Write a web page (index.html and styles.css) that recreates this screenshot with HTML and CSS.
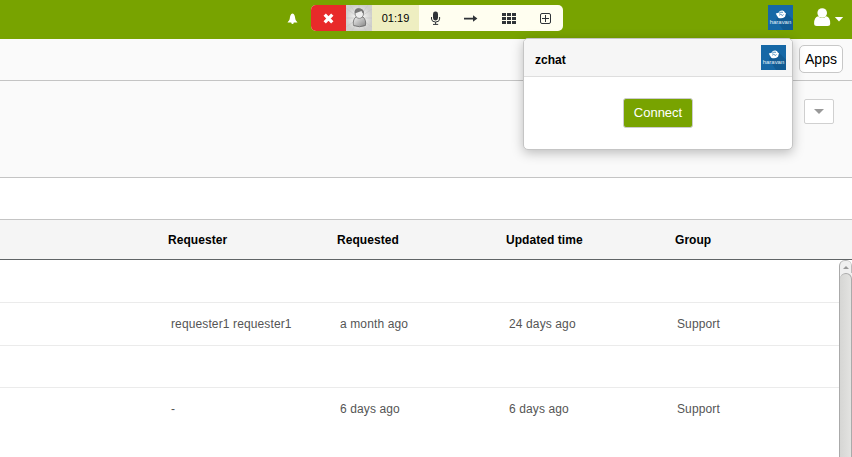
FILE: index.html
```
<!DOCTYPE html>
<html lang="en">
<head>
<meta charset="utf-8">
<title>Tickets</title>
<link rel="stylesheet" href="styles.css">
</head>
<body>
<svg class="defs" width="0" height="0">
  <defs>
    <clipPath id="sq"><rect width="25" height="25"/></clipPath>
    <symbol id="logo" viewBox="0 0 25 25">
      <g clip-path="url(#sq)">
        <rect width="25" height="25" fill="#1668a6"/>
        <path d="M17 7L25 14.5V25H15L8 14Z" fill="#125b93"/>
        <path d="M7.8 8.4L10.5 7.7Q11.5 5.4 14.5 5.6Q16.5 6.2 16.8 7.5L18 8.2L17 11.8Q14 14.2 10.5 12.9L8.8 10.5Z" fill="#fff"/>
        <path d="M11 8.3Q12.5 6.6 15 7.3M11.2 10.2L12.8 9.2L14.2 10.4Q15 10.5 15.5 9.5" fill="none" stroke="#2878b0" stroke-width=".8"/>
        <text x="12.5" y="18.8" text-anchor="middle" textLength="21.5" lengthAdjust="spacingAndGlyphs" class="logo-text">haravan</text>
      </g>
    </symbol>
  </defs>
</svg>
<header class="topbar">
  <svg class="bell" width="11" height="12" viewBox="0 0 11 12"><path d="M5.5 .6C3.6 1 3 3.3 2.8 5.2C2.6 7 1.8 7.8 .5 9.4H10.5C9.2 7.8 8.4 7 8.2 5.2C8 3.3 7.4 1 5.5 .6ZM4.2 9.5H6.8Q6.6 11 5.5 11T4.2 9.5Z" fill="#fff"/></svg>
  <div class="call">
    <div class="hangup"><svg width="11" height="11" viewBox="0 0 11 11"><path d="M1.7 1.7L9.3 9.3M9.3 1.7L1.7 9.3" stroke="#fff" stroke-width="3.3"/></svg></div>
    <svg class="avatar" width="26" height="26" viewBox="0 0 26 26">
      <defs>
        <radialGradient id="bg"><stop offset="0" stop-color="#fff"/><stop offset="1" stop-color="#cfcfcd"/></radialGradient>
        <linearGradient id="body" x2="1" y2="1"><stop offset="0" stop-color="#f2f2f2"/><stop offset="1" stop-color="#858585"/></linearGradient>
      </defs>
      <rect width="26" height="26" fill="url(#bg)"/>
      <path d="M13 13L0 3M13 13L4 0M13 13L13 0M13 13L22 0M13 13L26 4M13 13L26 13M13 13L26 22M13 13L20 26M13 13L6 26M13 13L0 22M13 13L0 13" stroke="#c4c4c4" stroke-width=".6"/>
      <path d="M10 12C7.2 14 7 18 7.6 20.5Q13.5 23 19.4 20.5C20 17 19.5 14 17 12Z" fill="url(#body)" stroke="#666" stroke-width=".8"/>
      <ellipse cx="13.3" cy="8.6" rx="4.2" ry="4.8" fill="#eee" stroke="#777" stroke-width=".8"/>
      <path d="M8.8 8.5C8 3 12 3 13.5 3.4C17 3.5 18.5 6 17.7 9Q16.4 8.3 15.5 6Q12 7.4 8.8 8.5Z" fill="#777"/>
    </svg>
    <div class="time">01:19</div>
    <div class="tool"><svg width="11" height="15" viewBox="0 0 11 15"><rect x="3" y=".5" width="5" height="9" rx="2.4" fill="#2f3338"/><path d="M1.5 6V8Q1.7 11 5.6 11T9.6 8V6M5.6 11V13.2M3 13.4H8.2" fill="none" stroke="#2f3338" stroke-width="1"/></svg></div>
    <div class="tool arrow"><svg width="15" height="9" viewBox="0 0 15 9"><path d="M1 3.7H10V1.3L14.4 4.5L10 7.7V5.4H1Z" fill="#2f3338"/></svg></div>
    <div class="tool"><svg width="14" height="11" viewBox="0 0 14 11"><path d="M0 0h4v3H0zM5 0h4v3H5zM10 0h4v3H10zM0 4h4v3H0zM5 4h4v3H5zM10 4h4v3H10zM0 8h4v3H0zM5 8h4v3H5zM10 8h4v3H10z" fill="#2f3338"/></svg></div>
    <div class="tool"><svg width="11" height="11" viewBox="0 0 11 11"><rect x=".5" y=".5" width="10" height="10" rx="1.5" fill="none" stroke="#2f3338"/><path d="M2 5.5H9M5.5 2V9" stroke="#2f3338"/></svg></div>
  </div>
  <svg class="brand" width="25" height="25"><use href="#logo"/></svg>
  <svg class="user" width="30" height="19" viewBox="0 0 30 19"><circle cx="8.2" cy="5" r="4.8" fill="#fff"/><path d="M4.2 8.2Q8.2 12 12.2 8.2Q16.2 9 16.2 15.5Q16.2 18 13.5 18H2.8Q.1 18 .1 15.5Q.1 9 4.2 8.2Z" fill="#fff"/><path d="M20.8 9H29.2L25 13.4Z" fill="#fff"/></svg>
</header>
<div class="tabs"><button class="apps">Apps</button></div>
<section class="filters"><button class="drop"><i class="caret"></i></button></section>
<main>
  <div class="row head"><span>Requester</span><span>Requested</span><span>Updated time</span><span>Group</span></div>
  <div class="body">
    <div class="rows">
      <div class="row blank"></div>
      <div class="row item"><span>requester1 requester1</span><span>a month ago</span><span>24 days ago</span><span>Support</span></div>
      <div class="row blank second"></div>
      <div class="row item last"><span>-</span><span>6 days ago</span><span>6 days ago</span><span>Support</span></div>
    </div>
    <div class="scroll"><div class="up"><i></i></div><div class="thumb"></div></div>
  </div>
</main>
<aside class="popup">
  <div class="popup-head"><b>zchat</b><svg width="25" height="25"><use href="#logo"/></svg></div>
  <div class="popup-body"><button class="connect">Connect</button></div>
</aside>
</body>
</html>
```
FILE: styles.css
```
* { box-sizing: border-box; }
body { margin: 0; width: 852px; height: 457px; overflow: hidden; background: #fff; font: 12px/16px "Liberation Sans", Arial, sans-serif; color: #000; }
svg { display: block; flex: none; }
button { font-family: inherit; padding: 0; margin: 0; }
.defs { position: absolute; }
.logo-text { font: 5.5px "Liberation Sans", sans-serif; fill: #e4f0f8; }
.topbar { display: flex; align-items: flex-start; height: 39px; padding: 5px 8px 0 287px; background: #78a300; }
.bell { margin: 8px 13px 0 0; }
.call { display: flex; width: 252px; height: 26px; border-radius: 5px; overflow: hidden; background: #fffef0; }
.hangup { display: flex; align-items: center; justify-content: center; width: 35px; background: #e82a2a; }
.time { width: 47px; line-height: 26px; text-align: center; font-size: 11px; background: #eeeec1; }
.tool { display: flex; align-items: center; justify-content: center; width: 33px; }
.tool + .tool { width: 38px; }
.tool + .arrow { padding-right: 2px; }
.tool:last-child { width: 35px; }
.brand { margin-left: 205px; }
.user { margin: 3px 0 0 21px; }
.tabs { display: flex; justify-content: flex-end; height: 42px; padding: 6px 9px 0 0; background: #fafafa; border-bottom: 1px solid #c4c4c4; }
.apps { width: 44px; height: 28px; border: 1px solid #c8c8c8; border-radius: 5px; background: #fff; font-size: 14px; color: #000; }
.filters { display: flex; justify-content: flex-end; height: 97px; padding: 18px 18px 0 0; background: #fafafa; border-bottom: 1px solid #c4c4c4; }
.drop { display: flex; align-items: center; justify-content: center; width: 30px; height: 25px; border: 1px solid #d0d0d0; border-radius: 2px; background: #fff; }
.caret { border: 5px solid transparent; border-top-color: #999; border-bottom: 0; }
main { padding-top: 41px; }
.row { display: grid; grid-template-columns: 169px 169px 168px 160px; padding-left: 171px; align-items: center; border-bottom: 1px solid #ebebeb; color: #555; letter-spacing: .12px; }
.head { height: 41px; padding-left: 168px; grid-template-columns: 169px 169px 169px 160px; border-top: 1px solid #c4c4c4; border-bottom: 1px solid #606466; background: #f5f5f5; color: #000; font-weight: bold; letter-spacing: .05px; }
.body { display: flex; height: 197px; }
.rows { width: 839px; }
.blank { height: 43px; }
.second { height: 42px; }
.item { height: 43px; }
.last { height: 41px; border-bottom: 0; }
.scroll { width: 13px; border-left: 1px solid #aaa; border-radius: 6px 6px 0 0; background: #f0f0f0; overflow: hidden; }
.up { display: flex; align-items: center; justify-content: center; height: 13px; border: 1px solid #bbb; border-left: 0; border-bottom: 0; border-radius: 5px 5px 0 0; }
.up i { border: 3px solid transparent; border-bottom-color: #999; border-top: 0; }
.thumb { height: 196px; border: 1px solid #aaa; border-left: 0; border-radius: 6px 6px 0 0; background: linear-gradient(90deg, #d6d6d4, #e3e3e1); }
.popup { position: absolute; left: 523px; top: 38px; width: 270px; height: 112px; border: 1px solid #c5c5c5; border-radius: 5px; background: #fff; box-shadow: 0 3px 12px rgba(0, 0, 0, .25); overflow: hidden; }
.popup-head { display: flex; align-items: center; justify-content: space-between; height: 38px; padding: 0 6px 0 11px; border-bottom: 1px solid #dedede; background: #f6f6f6; }
.popup-head b { margin-top: 5px; }
.popup-body { display: flex; justify-content: center; padding: 21px 0 0 0; }
.connect { width: 70px; height: 30px; padding-bottom: 2px; border: 1px solid #ccc; border-radius: 3px; background: #78a300; color: #fff; font-size: 13px; }
```
